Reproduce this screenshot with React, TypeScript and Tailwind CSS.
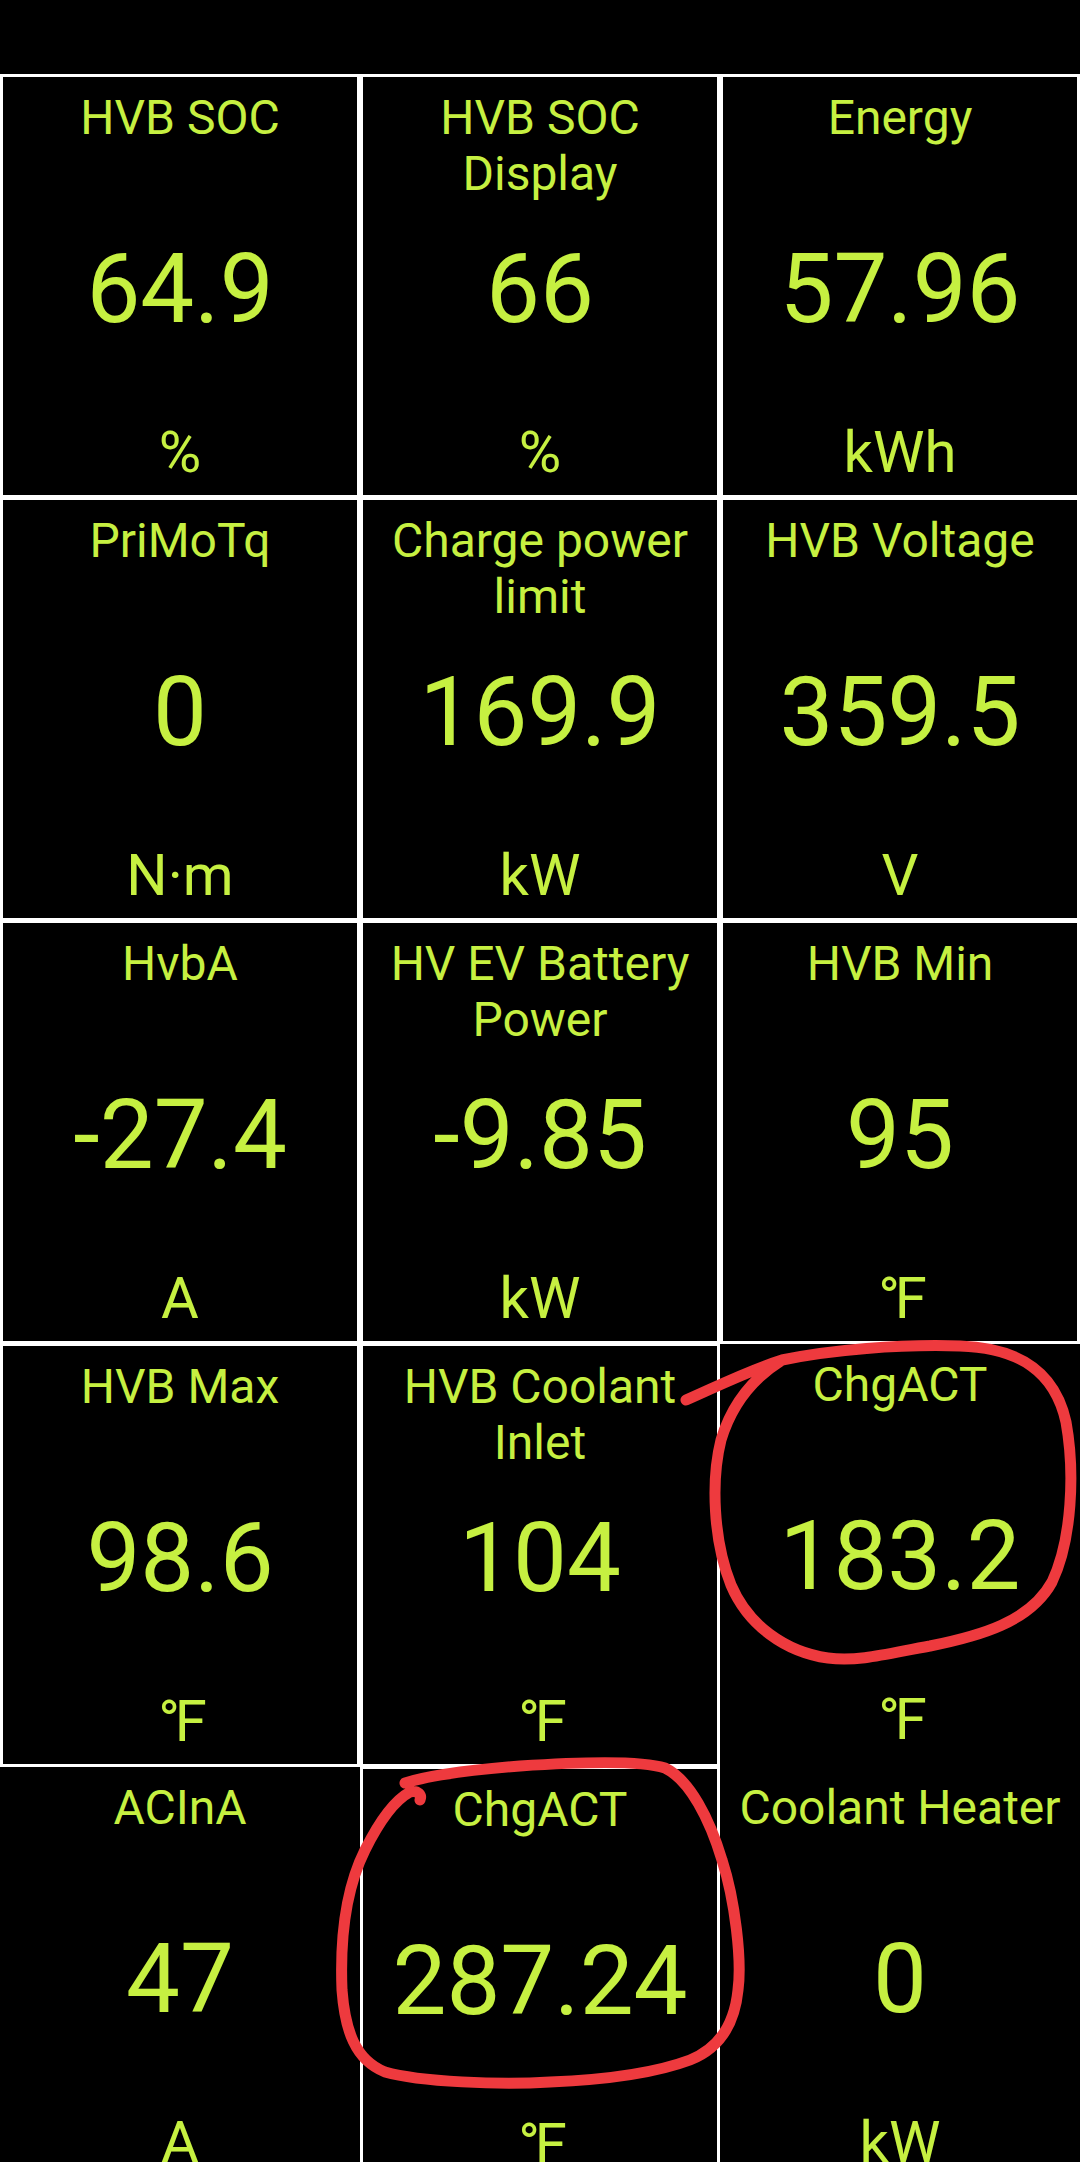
import React from "react";

type Gauge = { title: string; value: string; unit: string };

const gauges: Gauge[] = [
  { title: "HVB SOC", value: "64.9", unit: "%" },
  { title: "HVB SOC Display", value: "66", unit: "%" },
  { title: "Energy", value: "57.96", unit: "kWh" },
  { title: "PriMoTq", value: "0", unit: "N·m" },
  { title: "Charge power limit", value: "169.9", unit: "kW" },
  { title: "HVB Voltage", value: "359.5", unit: "V" },
  { title: "HvbA", value: "-27.4", unit: "A" },
  { title: "HV EV Battery Power", value: "-9.85", unit: "kW" },
  { title: "HVB Min", value: "95", unit: "°F" },
];

const hvbMax: Gauge = { title: "HVB Max", value: "98.6", unit: "°F" };
const coolantInlet: Gauge = { title: "HVB Coolant Inlet", value: "104", unit: "°F" };
const chgActA: Gauge = { title: "ChgACT", value: "183.2", unit: "°F" };
const acInA: Gauge = { title: "ACInA", value: "47", unit: "A" };
const chgActB: Gauge = { title: "ChgACT", value: "287.24", unit: "°F" };
const heater: Gauge = { title: "Coolant Heater", value: "0", unit: "kW" };

function Unit({ unit }: { unit: string }) {
  // degree sign sits tight against the F
  if (unit === "°F") {
    return <span className="tracking-[-5px]">°F</span>;
  }
  return <>{unit}</>;
}

function GaugeBody({ g }: { g: Gauge }) {
  return (
    <div className="flex h-[418px] flex-col items-center">
      <div className="h-[155px] w-full px-[12px] pt-[13px] text-center text-[48px] leading-[56px]">
        {g.title}
      </div>
      <div className="mt-[1px] h-[114px] whitespace-nowrap text-[96px] leading-[112px]">{g.value}</div>
      <div className="mt-auto pb-[9px] text-[58px] leading-[68px]">
        <Unit unit={g.unit} />
      </div>
    </div>
  );
}

// red marker scribbles drawn over the screenshot
function Scribbles() {
  return (
    <svg
      className="pointer-events-none absolute left-0 top-0"
      width="1080"
      height="2162"
      viewBox="0 0 1080 2162"
      fill="none"
      stroke="#ee3a3e"
      strokeWidth="11"
      strokeLinecap="round"
      strokeLinejoin="round"
    >
      <path d="M 686 1400 C 720 1385, 750 1370, 782 1360 C 830 1350, 900 1344, 960 1346 C 1020 1348, 1055 1372, 1066 1422 C 1075 1472, 1072 1540, 1052 1582 C 1030 1622, 980 1636, 930 1646 C 890 1653, 860 1662, 828 1658 C 785 1652, 748 1625, 731 1585 C 713 1540, 711 1480, 721 1440 C 733 1400, 758 1375, 782 1360" />
      <path d="M 405 1783 C 430 1775, 470 1770, 520 1766 C 580 1762, 640 1760, 665 1768 C 690 1780, 710 1820, 722 1860 C 735 1900, 742 1960, 738 1990 C 734 2030, 715 2050, 690 2060 C 650 2075, 600 2080, 550 2082 C 500 2085, 420 2082, 385 2072 C 355 2060, 345 2030, 342 1990 C 340 1940, 345 1890, 365 1850 C 380 1820, 395 1800, 410 1792 C 418 1790, 422 1795, 420 1800" />
    </svg>
  );
}

export default function App() {
  return (
    <div className="relative h-[2162px] w-[1080px] overflow-hidden bg-black font-['Roboto',sans-serif] text-[#c6f041]">
      <div className="h-[74px]" />
      <div className="grid grid-cols-3 auto-rows-[418px] gap-x-[6px] gap-y-[5px] bg-white px-[3px] pt-[3px]">
        {gauges.map((g, i) => (
          <div key={i} className="bg-black">
            <GaugeBody g={g} />
          </div>
        ))}

        <div className="bg-black">
          <GaugeBody g={hvbMax} />
        </div>
        <div className="bg-black">
          <GaugeBody g={coolantInlet} />
        </div>
        {/* right column of the last two rows has no divider */}
        <div className="row-span-2 -ml-[3px] -mr-[3px] -mt-[2px] flex flex-col gap-[5px] bg-black">
          <GaugeBody g={chgActA} />
          <GaugeBody g={heater} />
        </div>

        <div className="-ml-[3px] -mr-[3px] -mt-[2px] bg-black">
          <GaugeBody g={acInA} />
        </div>
        <div className="bg-black">
          <GaugeBody g={chgActB} />
        </div>
      </div>
      <Scribbles />
    </div>
  );
}
